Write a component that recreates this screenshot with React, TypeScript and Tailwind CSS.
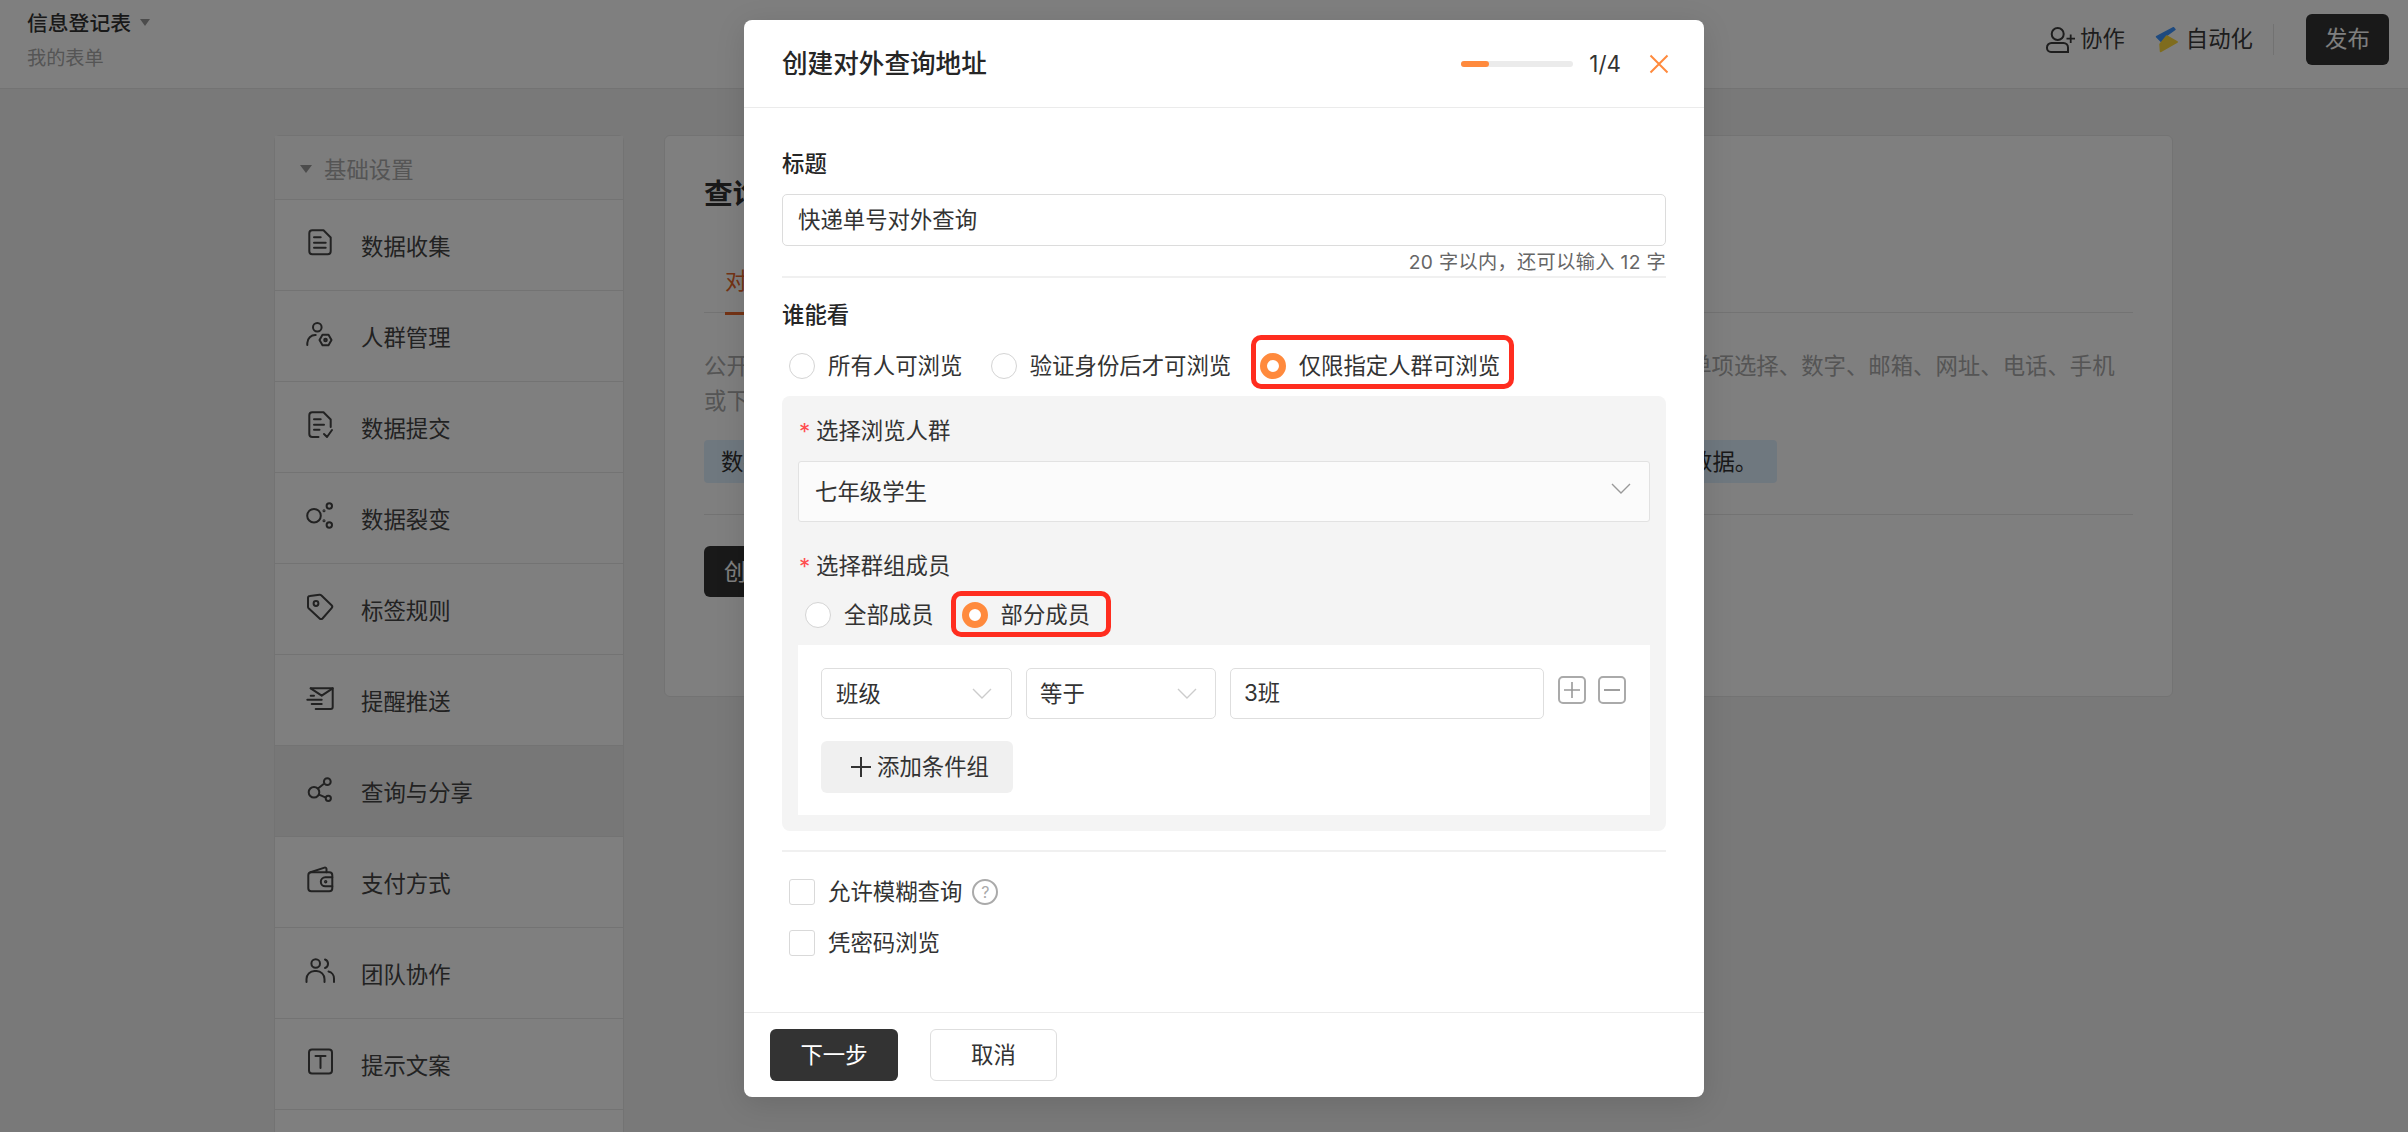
import type { ReactNode } from "react";

const stroke = {
  fill: "none",
  stroke: "currentColor",
  strokeWidth: 2,
  strokeLinecap: "round" as const,
  strokeLinejoin: "round" as const,
};

function Glyph({ children }: { children: ReactNode }) {
  return (
    <svg width="28" height="28" viewBox="0 0 28 28" className="shrink-0 mb-[5px] overflow-visible" {...stroke}>
      {children}
    </svg>
  );
}

const menu: { label: string; icon: ReactNode; active?: boolean }[] = [
  {
    label: "数据收集",
    icon: (
      <Glyph>
        <path d="M6.300 1.300h11.200l7.200 7.200v13.800a3 3 0 0 1-3 3H6.300a3 3 0 0 1-3-3V4.300a3 3 0 0 1 3-3z" />
        <path d="M8 8.300h6.700M8 13.700h11.700M8 18.700h11.700" />
      </Glyph>
    ),
  },
  {
    label: "人群管理",
    icon: (
      <Glyph>
        <circle cx="11.300" cy="7.300" r="4.300" />
        <path d="M1.300 25v-2a8 8 0 0 1 8.400-8" />
        <path d="M13.500 20l3-5.200h6l3 5.200-3 5.200h-6z" />
        <circle cx="19.500" cy="20" r="1.300" />
      </Glyph>
    ),
  },
  {
    label: "数据提交",
    icon: (
      <Glyph>
        <path d="M12.500 26H6.300a3 3 0 0 1-3-3V4.300a3 3 0 0 1 3-3h11.200l7.200 7.200V16" />
        <path d="M8 8.300h6.700M8 13.700h10M8 18.700h5.500M18 23l3 3 5-7" />
      </Glyph>
    ),
  },
  {
    label: "数据裂变",
    icon: (
      <Glyph>
        <circle cx="8" cy="13.700" r="6.800" />
        <circle cx="23.300" cy="4" r="2.700" />
        <circle cx="23.300" cy="23" r="2.700" />
        <circle cx="18" cy="8.700" r="0.500" />
        <circle cx="18" cy="18.700" r="0.500" />
      </Glyph>
    ),
  },
  {
    label: "标签规则",
    icon: (
      <Glyph>
        <path d="M2 5a2 2 0 0 1 1.800-2l9.700-1.300a2 2 0 0 1 1.700.6l10.400 10a2 2 0 0 1 0 2.800L16.500 25.500a2 2 0 0 1-2.900 0L2.600 15.200a2 2 0 0 1-.6-1.400z" />
        <circle cx="10" cy="10.500" r="2.400" />
      </Glyph>
    ),
  },
  {
    label: "提醒推送",
    icon: (
      <Glyph>
        <path d="M4.700 4.300h22v18.700a2 2 0 0 1-2 2H9.700" />
        <path d="M4.700 4.300l11 7.400 11-7.400M4.700 11.700h3.300M1.300 15.700h14.400M5.700 20h10" />
      </Glyph>
    ),
  },
  {
    label: "查询与分享",
    active: true,
    icon: (
      <Glyph>
        <circle cx="8" cy="17.300" r="5.300" />
        <circle cx="21.300" cy="6.700" r="3.400" />
        <circle cx="22.300" cy="23.300" r="2.600" />
        <path d="M12.300 13.300l5-4M13 19.700l6.300 2.600" />
      </Glyph>
    ),
  },
  {
    label: "支付方式",
    icon: (
      <Glyph>
        <rect x="2.300" y="6.300" width="24" height="19" rx="3" />
        <path d="M4.500 6.300L18.500 1.600a1.500 1.500 0 0 1 2 1.400v3.300M26.300 11.300h-7a4.500 4.500 0 0 0 0 9h7" />
        <circle cx="19.700" cy="15.700" r="0.700" />
      </Glyph>
    ),
  },
  {
    label: "团队协作",
    icon: (
      <Glyph>
        <circle cx="9.700" cy="6.500" r="4.300" />
        <path d="M0.500 25v-3a8 8 0 0 1 8-8h2a8 8 0 0 1 8 8v3M19 2.500a4.500 4.500 0 0 1 0 8.500M22.500 14.500a7 7 0 0 1 5.500 7v3.500" />
      </Glyph>
    ),
  },
  {
    label: "提示文案",
    icon: (
      <Glyph>
        <rect x="3" y="1.500" width="23" height="24" rx="3" />
        <path d="M9.500 8h10M14.500 8v12" />
      </Glyph>
    ),
  },
  { label: "", icon: null },
];

function Radio({ label, on, children }: { label: string; on?: boolean; children?: ReactNode }) {
  return (
    <div className="relative flex items-center gap-[13px] h-[26px]">
      {children}
      {on ? (
        <span className="w-[26px] h-[26px] rounded-full border-[7px] border-[#ff8a3d] bg-white shrink-0" />
      ) : (
        <span className="w-[26px] h-[26px] rounded-full border border-[#d4d4d4] bg-white shrink-0" />
      )}
      <span className="whitespace-nowrap">{label}</span>
    </div>
  );
}

function Chevron({ className }: { className: string }) {
  return (
    <svg width="20" height="11" viewBox="0 0 20 11" fill="none" stroke="currentColor" strokeWidth="1.4" className={className}>
      <path d="M1 1l9 9 9-9" />
    </svg>
  );
}

function Check({ label, children }: { label: string; children?: ReactNode }) {
  return (
    <div className="flex items-center gap-[13px] h-[26px]">
      <span className="w-[26px] h-[26px] rounded-[3px] border border-[#d9d9d9] bg-white shrink-0" />
      <span className="whitespace-nowrap">{label}</span>
      {children}
    </div>
  );
}

export default function App() {
  return (
    <div className="relative w-[2408px] h-[1132px] overflow-hidden bg-[#f2f2f2] font-['Inter','Noto_Sans_CJK_SC',sans-serif] text-[22.4px] text-[#333]">
      {/* 顶栏 */}
      <header className="h-[89px] bg-white border-b border-[#e6e6e6] flex items-start justify-between pl-[27px] pr-[19px]">
        <div>
          <div className="mt-[9px] flex items-center h-[30px] text-[20.8px] font-medium text-[#333]">
            信息登记表
            <span className="ml-[9px] mb-[3px] w-0 h-0 border-x-[5px] border-x-transparent border-t-[7px] border-t-[#999]" />
          </div>
          <div className="mt-[4px] text-[19.2px] leading-[30px] text-[#aaa]">我的表单</div>
        </div>
        <div className="flex items-center h-[77px] pt-[1px]">
          <svg width="30" height="27" viewBox="0 0 30 27" fill="none" stroke="#3a3a3a" strokeWidth="2">
            <circle cx="11.700" cy="8" r="6" />
            <path d="M5.500 17h12a4.500 4.500 0 0 1 4.500 4.500v4.500h-17a4 4 0 0 1-4-4v-.5a4.500 4.500 0 0 1 4.500-4.500z" />
            <path d="M20.500 12.700h8.500M24.700 8.500v8.500" strokeWidth="1.800" />
          </svg>
          <span className="ml-[4px] text-[#3a3a3a]">协作</span>
          <svg width="24" height="27" viewBox="0 0 24 27" strokeWidth="1.500" strokeLinejoin="round" className="ml-[30px]">
            <path d="M1.500 10.700L18.500 1.700l1.500 1.800-9 6.500-4.300 6z" fill="#3d94ff" stroke="#3d94ff" />
            <path d="M11.700 10l10.500 6L5.500 25.500 5 18.300z" fill="#ffd93c" stroke="#ffd93c" />
          </svg>
          <span className="ml-[7px] text-[#3a3a3a]">自动化</span>
          <span className="ml-[20px] w-px h-[31px] bg-[#e5e5e5]" />
          <button className="ml-[32px] w-[83px] h-[51px] rounded-[6px] bg-[#333] text-white">发布</button>
        </div>
      </header>

      {/* 页面内容 */}
      <main className="flex items-start gap-[40px] pl-[274px] pt-[46px]">
        <aside className="w-[350px] h-[1100px] bg-white border border-[#e6e6e6] rounded-t-[6px] shrink-0">
          <div className="h-[64px] flex items-center pl-[25px] text-[#aaa] bg-[#fafafa] border-b border-[#e6e6e6]">
            <span className="mt-[2px] w-0 h-0 border-x-[6px] border-x-transparent border-t-[8px] border-t-[#999]" />
            <span className="ml-[12px] mt-[4px]">基础设置</span>
          </div>
          {menu.map((m, i) => (
            <div
              key={i}
              className={
                m.active
                  ? "h-[91px] flex items-center gap-[27px] pl-[31px] border-b border-[#e6e6e6] bg-[#eeeeee] text-[#444]"
                  : "h-[91px] flex items-center gap-[27px] pl-[31px] border-b border-[#e6e6e6] text-[#444]"
              }
            >
              {m.icon}
              <span className="mt-[3px]">{m.label}</span>
            </div>
          ))}
        </aside>

        <section className="w-[1509px] h-[562px] bg-white border border-[#e6e6e6] rounded-[6px] px-[39px] pt-[38px] shrink-0">
          <h2 className="text-[28.8px] leading-[40px] font-bold text-[#333]">查询与分享</h2>
          <div className="mt-[50px] w-[1429px] border-b border-[#e6e6e6] pl-[21px] h-[49px]">
            <span className="inline-block h-[49px] leading-[30px] border-b-[3px] border-[#e8662a] text-[#e8662a]">对外查询</span>
          </div>
          <div className="mt-[35px] leading-[35px] text-[#aaa] whitespace-nowrap">
            <div>公开查询地址可以让填写者通过查询条件查询已提交的数据，查询条件的字段类型可支持单行文字、单项选择、数字、邮箱、网址、电话、手机</div>
            <div>或下拉选择。</div>
          </div>
          <div className="mt-[22px] w-[1073px] h-[43px] rounded-[4px] bg-[#dff0ff] pl-[17px] leading-[43px] whitespace-nowrap">
            数据查询地址发布后，任何人都可以通过该地址和设定的查询条件 查询到表单内对应的全已提交的数据。
          </div>
          <div className="mt-[31px] w-[1429px] border-b border-[#e6e6e6]" />
          <button className="mt-[31px] h-[51px] px-[20px] rounded-[6px] bg-[#333] text-white">创建对外查询地址</button>
        </section>
      </main>

      {/* 弹窗 */}
      <div className="absolute inset-0 bg-black/50 flex justify-center items-start pl-[40px] pt-[20px]">
        <div className="w-[960px] h-[1077px] bg-white rounded-[8px] flex flex-col shadow-[0_6px_30px_rgba(0,0,0,0.12)]">
          <div className="h-[88px] shrink-0 border-b border-[#ebebeb] flex items-center pl-[38px] pr-[35px]">
            <span className="mt-[2px] text-[25.6px] font-medium text-[#262626]">创建对外查询地址</span>
            <div className="ml-auto w-[112px] h-[6px] rounded-full bg-[#ebebeb]">
              <div className="w-[28px] h-[6px] rounded-full bg-[#ff8a3d]" />
            </div>
            <span className="ml-[16px] text-[#333]">1/4</span>
            <svg width="20" height="20" viewBox="0 0 20 20" fill="none" stroke="#ff8a3d" strokeWidth="2" className="ml-[28px]">
              <path d="M1.500 1.500l17 17M18.500 1.500l-17 17" />
            </svg>
          </div>

          <div className="flex-1 px-[38px] pt-[41px] leading-[30px]">
            <div className="font-medium text-[#262626]">标题</div>
            <div className="mt-[15px] h-[52px] rounded-[5px] border border-[#dcdcdc] flex items-center pl-[15px]">快递单号对外查询</div>
            <div className="mt-[4px] text-right text-[19.2px] leading-[24px] tracking-[0.35px] text-[#666]">20 字以内，还可以输入 12 字</div>
            <div className="mt-[2px] h-[2px] bg-[#f0f0f0]" />
            <div className="mt-[22px] font-medium text-[#262626]">谁能看</div>
            <div className="mt-[23px] flex gap-[28.4px] pl-[7px]">
              <Radio label="所有人可浏览" />
              <Radio label="验证身份后才可浏览" />
              <Radio label="仅限指定人群可浏览" on>
                <span className="absolute -left-[9px] -right-[14px] -top-[18px] -bottom-[10px] rounded-[10px] border-[5px] border-[#ff2d1f]" />
              </Radio>
            </div>

            <div className="mt-[17px] rounded-[8px] bg-[#f4f4f4] px-[16px] pt-[20px] pb-[16px]">
              <div className="relative pl-[18px]">
                <span className="absolute left-[1px] top-[1px] text-[#ff4d4f]">*</span>
                选择浏览人群
              </div>
              <div className="mt-[15px] h-[61px] rounded-[3px] border border-[#e2e2e2] bg-[#fbfbfb] flex items-center justify-between pl-[16px] pr-[18px]">
                七年级学生
                <Chevron className="text-[#999] mb-[6px]" />
              </div>
              <div className="relative mt-[29px] pl-[18px]">
                <span className="absolute left-[1px] top-[1px] text-[#ff4d4f]">*</span>
                选择群组成员
              </div>
              <div className="mt-[21px] flex gap-[28px] pl-[7px]">
                <Radio label="全部成员" />
                <Radio label="部分成员" on>
                  <span className="absolute -left-[11px] -right-[21px] -top-[11px] -bottom-[9px] rounded-[10px] border-[5px] border-[#ff2d1f]" />
                </Radio>
              </div>
              <div className="mt-[17px] h-[170px] bg-white pl-[23px] pt-[23px]">
                <div className="flex items-start gap-[14px]">
                  <div className="w-[191px] h-[51px] rounded-[5px] border border-[#dedede] flex items-center justify-between pl-[14px] pr-[19px]">
                    班级
                    <Chevron className="text-[#ccc] mb-[1px]" />
                  </div>
                  <div className="w-[190px] h-[51px] rounded-[5px] border border-[#dedede] flex items-center justify-between pl-[13px] pr-[18px]">
                    等于
                    <Chevron className="text-[#ccc] mb-[1px]" />
                  </div>
                  <div className="w-[314px] h-[51px] rounded-[5px] border border-[#dedede] flex items-center pl-[13px] pb-[1px]">3班</div>
                  <div className="flex gap-[12px] mt-[8px]">
                    <span className="w-[28px] h-[28px] rounded-[5px] border-2 border-[#aaa] flex items-center justify-center">
                      <svg width="16" height="16" viewBox="0 0 16 16" stroke="#999" strokeWidth="1.6"><path d="M8 0v16M0 8h16" /></svg>
                    </span>
                    <span className="w-[28px] h-[28px] rounded-[5px] border-2 border-[#aaa] flex items-center justify-center">
                      <svg width="16" height="16" viewBox="0 0 16 16" stroke="#888" strokeWidth="1.6"><path d="M0 8h16" /></svg>
                    </span>
                  </div>
                </div>
                <div className="mt-[22px] w-[192px] h-[52px] rounded-[6px] bg-[#f0f0f0] flex items-center pl-[30px] gap-[6px]">
                  <svg width="20" height="20" viewBox="0 0 20 20" stroke="#333" strokeWidth="2"><path d="M10 0v20M0 10h20" /></svg>
                  <span>添加条件组</span>
                </div>
              </div>
            </div>

            <div className="mt-[19px] h-[2px] bg-[#f0f0f0]" />
            <div className="mt-[27px] pl-[7px]">
              <Check label="允许模糊查询">
                <span className="w-[26px] h-[26px] -ml-[3px] rounded-full border-2 border-[#aaa] flex items-center justify-center text-[16px] text-[#aaa]">?</span>
              </Check>
            </div>
            <div className="mt-[25px] pl-[7px]">
              <Check label="凭密码浏览" />
            </div>
          </div>

          <div className="h-[85px] shrink-0 border-t border-[#ebebeb] flex items-start gap-[32px] pl-[26px] pt-[16px]">
            <button className="w-[128px] h-[52px] rounded-[6px] bg-[#333] text-white">下一步</button>
            <button className="w-[127px] h-[52px] rounded-[6px] border border-[#dedede] bg-white">取消</button>
          </div>
        </div>
      </div>
    </div>
  );
}
